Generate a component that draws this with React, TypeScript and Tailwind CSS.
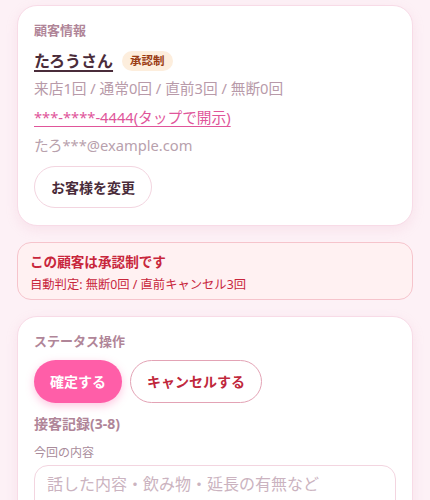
export default function App() {
  return (
    <div
      className="min-h-[500px] w-full bg-[#fdf1f6] px-[17px] pt-[5px] pb-6 flex flex-col gap-[16px]"
      style={{ fontFamily: '"Noto Sans", "Noto Sans CJK JP", sans-serif' }}
    >
      <div className="rounded-[20px] bg-white border border-[#f8dbe7] shadow-[0_4px_12px_rgba(230,160,190,0.18)] px-[16px] pt-[15px] pb-[17px]">
        <div className="text-[13px] font-bold text-[#b08598] leading-[18px]">顧客情報</div>
        <div className="mt-[11px] flex items-center gap-[9px]">
          <span className="text-[16px] font-bold text-[#4a2c3a] underline underline-offset-[3px] decoration-[1.5px] leading-[22px]">たろうさん</span>
          <span className="rounded-full bg-[#fdeedd] text-[#9a3c14] text-[11.5px] font-bold px-[8px] py-[2px] leading-[16px]">承認制</span>
        </div>
        <div className="mt-[6px] text-[14.7px] text-[#b89aa9] leading-[20px]">来店1回 / 通常0回 / 直前3回 / 無断0回</div>
        <div className="mt-[9px] text-[14.7px] text-[#e0559a] underline underline-offset-[3px] leading-[20px]">***-****-4444(タップで開示)</div>
        <div className="mt-[8px] text-[14.7px] text-[#b8a1ad] leading-[20px]">たろ***@example.com</div>
        <button className="mt-[11px] h-[42px] px-[16px] rounded-full border border-[#f3d5e0] bg-white text-[14px] font-bold text-[#4a2c3a]">お客様を変更</button>
      </div>

      <div className="rounded-[14px] bg-[#fff1f2] border border-[#f6c4cc] px-[12px] pt-[9px] pb-[5px]">
        <div className="text-[13.6px] font-bold text-[#c8263c] leading-[20px]">この顧客は承認制です</div>
        <div className="mt-[4px] text-[12.3px] text-[#c8263c] leading-[18px]">自動判定: 無断0回 / 直前キャンセル3回</div>
      </div>

      <div className="rounded-[20px] bg-white border border-[#f8dbe7] shadow-[0_4px_12px_rgba(230,160,190,0.18)] px-[16px] pt-[15px] pb-[16px]">
        <div className="text-[13px] font-bold text-[#b08598] leading-[18px]">ステータス操作</div>
        <div className="mt-[10px] flex gap-[8px]">
          <button className="h-[43px] px-[16px] rounded-full bg-[#ff5ea8] text-white text-[14px] font-bold shadow-[0_3px_8px_rgba(255,94,168,0.35)]">確定する</button>
          <button className="h-[43px] px-[16px] rounded-full border border-[#e3a3b5] bg-white text-[#c0283c] text-[14px] font-bold">キャンセルする</button>
        </div>
        <div className="mt-[12px] text-[14px] font-bold text-[#b08598] leading-[18px]">接客記録(3-8)</div>
        <div className="mt-[11px] text-[12px] text-[#a98c9b] leading-[18px]">今回の内容</div>
        <div className="mt-[3px] h-[80px] rounded-[14px] border border-[#f3d5e0] px-[12px] pt-[7px] text-[16px] text-[#cbb3c0] leading-[22px]">話した内容・飲み物・延長の有無など</div>
      </div>
    </div>
  );
}
